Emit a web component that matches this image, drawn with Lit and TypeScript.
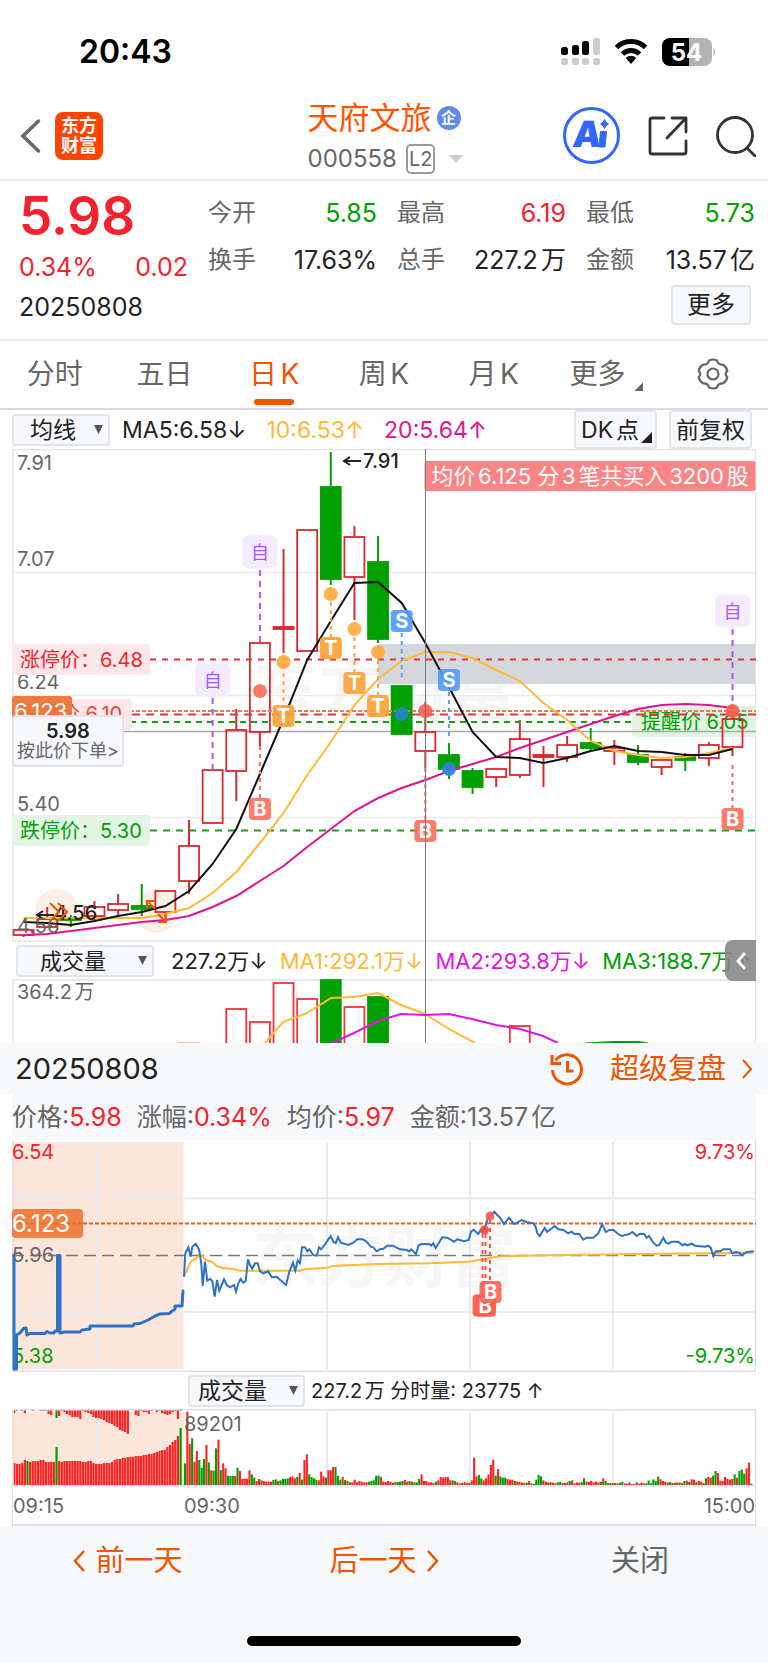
import { LitElement, html, svg, css } from "lit";
import { customElement, state } from "lit/decorators.js";

const UP = "#d7292f";
const DOWN = "#00a000";

type Candle = [up: 0 | 1, high: number, top: number, bottom: number, low: number];

/* Daily candles, one per trading day, in chart units. */
const CANDLES: Candle[] = [
  [1, 929, 930, 935, 937],
  [1, 907, 919, 927, 927],
  [0, 915, 918, 920, 927],
  [1, 901, 907, 916, 920],
  [1, 894, 904, 910, 915],
  [0, 884, 906, 909, 916],
  [1, 891, 891, 912, 920],
  [1, 820, 846, 881, 894],
  [1, 770, 770, 823, 823],
  [1, 709, 730, 771, 801],
  [1, 643, 643, 732, 746],
  [1, 549, 627, 629, 653],
  [1, 530, 530, 651, 651],
  [0, 452, 487, 579, 585],
  [1, 526, 537, 577, 620],
  [0, 536, 562, 639, 643],
  [0, 685, 686, 734, 734],
  [1, 702, 732, 751, 768],
  [0, 743, 755, 769, 779],
  [0, 768, 771, 787, 794],
  [1, 769, 769, 777, 787],
  [1, 720, 739, 775, 778],
  [1, 746, 755, 757, 787],
  [1, 736, 745, 757, 762],
  [0, 728, 743, 748, 751],
  [1, 740, 748, 751, 765],
  [0, 745, 755, 762, 765],
  [1, 760, 760, 767, 775],
  [0, 753, 757, 760, 771],
  [1, 742, 745, 758, 766],
  [1, 710, 719, 747, 756],
];

const dayX = (i: number) => 23.6 + 23.63 * i;
const line = (ys: number[]) => ys.map((y, i) => `${dayX(i).toFixed(1)},${y}`).join(" ");

const MA5 = [922, 923, 925, 921, 916, 912, 906, 891, 864, 829, 774, 719, 660, 621, 583, 582, 603, 643, 687, 732, 757, 758, 763, 758, 751, 746, 751, 752, 755, 755, 749];
const MA10 = [918, 918, 918, 918, 918, 918, 914, 908, 893, 872, 843, 813, 775, 742, 705, 679, 661, 652, 652, 658, 670, 681, 703, 720, 741, 751, 755, 758, 757, 753, 748];
const MA20 = [935, 934, 931, 928, 925, 922, 920, 916, 907, 896, 881, 866, 847, 829, 811, 798, 788, 780, 771, 764, 757, 748, 740, 732, 724, 716, 709, 705, 704, 705, 708];

const VOLUMES: [number, 0 | 1, number][] = [
  [9, 1, 1009], [10, 1, 1022], [11, 1, 983], [12, 1, 999], [13, 0, 980],
  [14, 1, 1007], [15, 0, 997], [21, 1, 1026],
];

/* Minute series are stored at three units per chart unit. */
const third = (flat: number[], dx = 0) => {
  const out: string[] = [];
  for (let i = 0; i < flat.length; i += 2) out.push(`${((flat[i] + dx) / 3).toFixed(1)},${(1130 + flat[i + 1] / 3).toFixed(1)}`);
  return out.join(" ");
};

const PRICE_AM = [552,440,556,370,565,352,572,380,577,350,587,341,597,358,604,400,608,468,615,395,622,452,630,446,637,453,644,500,651,450,658,482,672,448,680,465,690,472,702,465,708,485,715,460,722,447,730,458,737,452,744,388,750,405,757,416,765,400,773,400,780,424,790,430,805,424,815,442,830,440,858,465,868,425,879,398,886,422,893,392,900,400,906,352,915,352,922,364,928,358,940,375,950,377,957,352,963,358,975,343,992,318,1000,335,1007,340,1014,322,1022,338,1045,345,1060,338,1072,328,1088,328,1100,335,1112,350,1120,352,1130,364];
const PRICE_PM = [0,358,10,356,22,347,38,347,60,358,80,360,88,364,94,358,108,372,116,346,125,342,148,342,154,347,160,340,167,354,187,322,202,323,222,335,232,328,252,334,266,330,273,305,281,299,295,312,302,300,313,298,322,270,330,258,343,245,352,255,360,263,372,282,387,263,402,282,412,278,425,270,440,276,460,280,467,290,472,310,479,318,494,294,501,306,524,288,535,298,550,300,564,310,575,305,583,312,598,312,610,329,620,323,640,323,655,310,666,283,678,306,688,300,700,300,715,312,725,318,748,312,757,306,770,318,780,311,793,312,800,323,807,318,820,338,830,347,838,345,850,323,858,338,866,341,875,335,895,335,907,346,915,342,922,346,935,341,945,347,975,350,985,347,992,353,1000,378,1007,364,1020,364,1030,358,1050,358,1057,370,1068,366,1078,368,1086,376,1100,366,1121,364];
const AVG_AM = [552,440,572,395,597,378,605,377,618,390,637,396,650,408,668,414,700,417,720,422,900,422,915,418,980,413,1000,408,1060,405];
const AVG_PM = [0,402,150,400,265,395,315,388,340,382,365,379,430,377,600,374,850,371,1121,368];
const AUCTION = "14,1255 14,1369 16.5,1369 16.5,1335 20,1333 24,1328 26,1328 27,1335 30,1333.5 45,1333.5 47,1331.5 50,1333 54,1333 55,1331 57.5,1331 57.5,1255.5 60,1255.5 60,1333 64,1332 80,1332 82,1330 90,1329 90,1326 133,1326 134,1324 140,1323.5 148,1320 155,1316 160,1314 169,1313.5 175,1309 175,1306 182,1306 183,1291";

/* Per-minute volume; a negative value is a falling minute. */
const MINUTE_VOL = [-65,220,123,-140,70,102,-75,-52,-78,120,-68,44,-43,-110,136,-45,65,50,-28,-27,-27,27,-52,42,18,20,18,44,-32,-22,12,18,-14,12,10,10,10,-15,-17,12,-14,-18,-18,-20,24,26,20,-24,36,-16,75,92,-32,-24,-20,-16,14,40,26,-22,44,44,54,-54,-28,-16,24,-15,12,-8,8,16,8,12,10,8,8,-10,-12,-14,-28,-28,
24,10,9,12,10,-6,9,-9,-10,-12,15,10,-12,10,-8,-8,-18,32,12,12,8,8,6,-10,14,24,22,24,24,14,-14,12,-8,5,6,10,6,-6,14,82,26,-30,-20,14,20,32,60,76,-28,48,-26,-22,-22,18,16,16,-12,10,10,7,6,-7,12,5,-3,-16,-30,-26,14,10,-8,8,7,5,-8,-9,6,6,8,-12,14,5,8,7,-8,-20,10,9,12,8,10,8,-10,20,-12,6,-6,6,-6,5,-7,-10,5,4,8,3,3,-8,4,7,5,-5,-13,-5,-17,-12,-25,17,12,9,-7,9,-6,7,8,-7,6,-12,13,-9,17,16,-8,13,10,5,-20,24,22,-28,-42,36,13,12,24,18,16,18,-32,22,-42,-46,-34,50,67,4,0,58];

const AUCTION_UP = [22,21,21,22,25,-24,23,24,24,24,25,25,23,23,23,23,-38,24,23,24,24,24,24,24,24,24,23,23,24,24,22,21,21,21,22,22,22,23,25,26,26,27,27,28,28,28,29,29,29,30,30,31,31,32,33,34,35,35,38,40,43,45,49,-57];
const AUCTION_DOWN = [3,1,0,1,3,0,0,1,0,0,1,1,1,4,5,0,-8,6,1,2,4,5,7,7,7,9,1,2,3,4,7,8,8,9,10,12,13,14,16,17,20,21,22,24,0,0,5,6,1,2,2,4,1,0,2,1,3,4,5,4,2,1,9,-1];

const badge = (x: number, y: number, t: string, fill: string) => svg`
  <rect x=${x - 11} y=${y - 11} width="22" height="22" rx="4" fill=${fill} opacity=".92"></rect>
  <text class="badge" x=${x} y=${y + 7}>${t}</text>`;

const selfPick = (i: number, y: number, to: number) => svg`
  <line x1=${dayX(i)} x2=${dayX(i)} y1=${y + 18} y2=${to} stroke="#a855ff" stroke-width="2" stroke-dasharray="6 5"></line>
  <rect x=${dayX(i) - 17.5} y=${y - 16.5} width="35" height="33" rx="6" fill="#f4ebff"></rect>
  <text class="self" x=${dayX(i)} y=${y + 7}>自</text>`;

const stem = (x: number, y1: number, y2: number, c: string) =>
  svg`<line x1=${x} x2=${x} y1=${y1} y2=${y2} stroke=${c} stroke-width="2" stroke-dasharray="4 4"></line>`;

const dot = (x: number, y: number, c: string, r = 7) =>
  svg`<circle cx=${x} cy=${y} r=${r} fill=${c} opacity=".92"></circle>`;

const rule = (x1: number, x2: number, y: number, c: string, dash: string, w = 2) =>
  svg`<line x1=${x1} x2=${x2} y1=${y} y2=${y} stroke=${c} stroke-width=${w} stroke-dasharray=${dash}></line>`;

@customElement("stock-kline")
class StockKline extends LitElement {
  static styles = css`
    :host { display: block; position: relative; }
    svg { display: block; width: 100%; height: auto; }
    text { font-size: 20px; }
    .axis { fill: #666; }
    .note { fill: #222; font-weight: 500; }
    .badge { fill: #fff; font-weight: 700; text-anchor: middle; font-size: 20px; }
    .self { fill: #a855ff; font-size: 18px; text-anchor: middle; }
    .water { font-size: 66px; font-weight: 700; fill: #f6f6f6; text-anchor: middle; }
    .tip { fill: #fff; font-size: 22px; text-anchor: middle; text-autospace: normal; }
    .big { font-size: 22px; fill: #fff; }
    .order {
      position: absolute; left: 0; top: 54%;
      padding: 4px 3px; border: 2px solid #e1e3ea; border-radius: 4px;
      background: #f7f8fb; color: #666; font: inherit; font-size: 18px; line-height: 20px;
      text-align: center;
    }
    .order b { display: block; font-size: 20px; font-weight: 600; color: #222; }
  `;

  render() {
    return html`
      <svg viewBox="12 449 744 493" role="img" aria-label="日K">
        <text class="water" x="384" y="714">东方财富</text>
        <g stroke="#e6ebf2" stroke-width="1.5">
          ${[572.5, 695.5, 817.5].map((y) => svg`<line x1="12" x2="756" y1=${y} y2=${y}></line>`)}
        </g>
        <rect x="13" y="449.5" width="742.5" height="491.5" fill="none" stroke="#e2e4e8" stroke-width="1.5"></rect>
        <rect x="378" y="644" width="377" height="40" fill="#d4d7db"></rect>
        <text class="axis" x="17" y="470">7.91</text>
        <text class="axis" x="17" y="566">7.07</text>
        <text class="axis" x="17" y="689">6.24</text>
        <text class="axis" x="17" y="811">5.40</text>

        <circle cx="57" cy="911" r="22" fill="#fdeee6"></circle>
        <circle cx="156.5" cy="911" r="22" fill="#fdeee6"></circle>

        <rect x="632" y="706" width="124" height="31" rx="4" fill="#e1f4e3"></rect>
        <line x1="12" x2="756" y1="731.5" y2="731.5" stroke="#a8a8a8" stroke-width="1.5"></line>
        <text x="641" y="729" fill="#00a000">提醒价 6.05</text>

        ${CANDLES.map(([up, high, top, bottom, low], i) => {
          const x = dayX(i);
          const c = up ? UP : DOWN;
          return svg`
            <line x1=${x} x2=${x} y1=${high} y2=${top} stroke=${c} stroke-width="2"></line>
            <line x1=${x} x2=${x} y1=${bottom} y2=${low} stroke=${c} stroke-width="2"></line>
            <rect x=${x - 10} y=${top} width="20" height=${Math.max(bottom - top, 1)} stroke=${c} stroke-width="1.8"
              fill=${up && bottom - top > 2 ? "none" : c}></rect>`;
        })}

        ${rule(150, 756, 659.5, "#e8333a", "6 6")}
        ${rule(130, 756, 711, "#ee7c41", "4 2")}
        ${rule(132, 756, 714.5, "#e8333a", "8 6")}
        ${rule(130, 632, 722, "#16a016", "6 5")}
        ${rule(150, 756, 830.5, "#16a016", "7 6")}

        <g fill="none" stroke-width="2">
          <polyline points=${line(MA20)} stroke="#e0148c"></polyline>
          <polyline points=${line(MA10)} stroke="#ffb838"></polyline>
          <polyline points=${line(MA5)} stroke="#111"></polyline>
        </g>

        ${selfPick(10, 552, 643)} ${selfPick(8, 680, 770)} ${selfPick(30, 611, 708)}

        ${stem(dayX(11), 665, 706, "#ffa33a")} ${dot(dayX(11), 662, "#ffa940")} ${badge(dayX(11), 716, "T", "#fca237")}
        ${stem(dayX(13), 594, 638, "#ffa33a")} ${dot(dayX(13), 594, "#ffa940")} ${badge(dayX(13), 648, "T", "#fca237")}
        ${stem(dayX(14), 629, 672, "#ffa33a")} ${dot(dayX(14), 629, "#ffa940")} ${badge(dayX(14), 683, "T", "#fca237")}
        ${stem(dayX(15), 652, 695, "#ffa33a")} ${dot(dayX(15), 652, "#ffa940")} ${badge(dayX(15), 706, "T", "#fca237")}
        ${stem(dayX(16), 633, 680, "#5b9ff5")} ${dot(dayX(16), 714, "#1f86c8")} ${badge(dayX(16), 621, "S", "#559bfa")}
        ${stem(dayX(18), 692, 736, "#5b9ff5")} ${dot(dayX(18), 769, "#2f86dc")} ${badge(dayX(18), 680, "S", "#559bfa")}
        ${stem(dayX(10), 746, 798, "#ff6a5a")} ${dot(dayX(10), 691, "#ff6f61")} ${badge(dayX(10), 809, "B", "#ff7060")}
        ${stem(dayX(17), 768, 820, "#ff6a5a")} ${dot(dayX(17), 711, "#f8604f")} ${badge(dayX(17), 831, "B", "#ff7060")}
        ${stem(dayX(30), 765, 808, "#ff6a5a")} ${dot(dayX(30), 711, "#f8604f")} ${badge(dayX(30), 819, "B", "#ff7060")}

        <rect x="12" y="644" width="138" height="31" rx="4" fill="#ffe6e8"></rect>
        <text x="20" y="667" fill="#f5222d">涨停价：6.48</text>
        <rect x="12" y="815" width="138" height="31" rx="4" fill="#e3f5e5"></rect>
        <text x="20" y="838" fill="#00a000">跌停价：5.30</text>
        <rect x="12" y="699" width="120" height="31" rx="4" fill="#ffe6e8"></rect>
        <rect x="12" y="696" width="60" height="24" rx="3" fill="#ee7c41"></rect>
        <text x="20" y="721" fill="#f0453a">提醒价 6.10</text>
        <rect x="12" y="696" width="60" height="24" rx="3" fill="#ee7c41" opacity=".75"></rect>
        <text class="big" x="14" y="719">6.123</text>

        <path d="M361 461H345M350 457l-6 4 6 4" stroke="#222" stroke-width="2" fill="none"></path>
        <text class="note" x="363" y="468">7.91</text>
        <path d="M54 915H38M43 911l-6 4 6 4" stroke="#222" stroke-width="2" fill="none"></path>
        <text class="note" x="54" y="920">4.56</text>
        <text class="axis" x="17" y="933">4.56</text>
        <g fill="none" stroke="#ee5500" stroke-width="2">
          <path d="M50 903l9 9-9 9M58 903l9 9-9 9"></path>
          <path d="M147 909v-8h8M147 901l8 8M166 914v8h-8M166 922l-8-8"></path>
        </g>

        <rect x="424.5" y="461" width="331" height="30" rx="3" fill="#fb8585"></rect>
        <text class="tip" x="590" y="484">均价6.125 分3笔共买入3200股</text>
      </svg>
      <button class="order"><b>5.98</b>按此价下单&gt;</button>
    `;
  }
}

@customElement("stock-volume")
class StockVolume extends LitElement {
  static styles = css`
    :host { display: block; }
    svg { display: block; width: 100%; height: auto; }
    text { font-size: 20px; fill: #666; text-autospace: normal; }
  `;
  render() {
    return html`
      <svg viewBox="12 979 744 64" role="img" aria-label="成交量">
        <path d="M13 1043V980H755.5V1043" fill="none" stroke="#e2e4e8" stroke-width="1.5"></path>
        <text x="17" y="999">364.2万</text>
        <rect x="178" y="1042" width="22" height="2" fill="#f9bcbc"></rect>
        ${VOLUMES.map(([i, up, y]) => svg`<rect x=${dayX(i) - 10} y=${y} width="20" height="70"
          fill=${up ? "#fff" : DOWN} stroke=${up ? "#f5333a" : DOWN} stroke-width="1.8"></rect>`)}
        <g fill="none" stroke-width="2">
          <polyline stroke="#ffb838" points="265,1043 283,1022 307,1013 331,998 354,997 378,993 401,1005 425,1014 449,1029 475,1043"></polyline>
          <polyline stroke="#e414e4" points="332,1043 354,1033 378,1021 401,1014 425,1015 449,1014 472,1019 496,1025 520,1029 543,1036 558,1043"></polyline>
          <polyline stroke="#00a000" points="585,1043.5 614,1042 638,1042 648,1043.5"></polyline>
        </g>
      </svg>`;
  }
}

@customElement("minute-price")
class MinutePrice extends LitElement {
  static styles = css`
    :host { display: block; }
    svg { display: block; width: 100%; height: auto; }
    text { font-size: 20px; }
    .water { font-size: 66px; font-weight: 700; fill: #f6f6f6; text-anchor: middle; }
    .badge { fill: #fff; font-weight: 700; text-anchor: middle; }
    .big { font-size: 24px; fill: #fff; }
    .end { text-anchor: end; }
  `;
  render() {
    return html`
      <svg viewBox="12 1140 744 232" role="img" aria-label="分时">
        <text class="water" x="384" y="1282">东方财富</text>
        <rect x="12" y="1142" width="171.5" height="227" fill="#fce6da"></rect>
        <g stroke="#e6eaf1" stroke-width="2">
          ${[98, 327, 470, 613].map((x) => svg`<line x1=${x} x2=${x} y1="1142" y2="1369"></line>`)}
          ${[1198.5, 1312].map((y) => svg`<line x1="12" x2="756" y1=${y} y2=${y}></line>`)}
        </g>
        <path d="M13 1140V1371M755.5 1140V1371M12 1371.3H756" stroke="#dcdfe6" stroke-width="1.5" fill="none"></path>
        <line x1="12" x2="750" y1="1255.5" y2="1255.5" stroke="#777" stroke-width="1.6" stroke-dasharray="12 6"></line>
        ${rule(83, 756, 1223.5, "#ee5a10", "4 2")}
        <rect x="12" y="1209" width="71" height="29" rx="4" fill="#ef8145"></rect>
        ${rule(12, 83, 1223.5, "#ee6a20", "4 2")}
        <text x="12" y="1262" fill="#666">5.96</text>
        <text x="12" y="1363" fill="#00a000">5.38</text>
        <polyline points=${AUCTION} fill="none" stroke="#2f72c4" stroke-width="3" stroke-linejoin="round" stroke-linecap="round"></polyline>
        <polyline points=${third(AVG_AM) + " " + third(AVG_PM, 1140)} fill="none" stroke="#ffb838" stroke-width="2"></polyline>
        <polyline points=${third(PRICE_AM) + " " + third(PRICE_PM, 1140)} fill="none" stroke="#2f72c4" stroke-width="2"></polyline>
        ${stem(482.5, 1234, 1296, "#ff5544")} ${stem(485.5, 1234, 1296, "#ff5544")} ${stem(490, 1220, 1282, "#ff5544")}
        ${dot(484.5, 1230, "#f5483c", 4.5)} ${dot(490, 1216, "#f5605a", 4.5)}
        ${badge(483.5, 1305.5, "B", "#ff5e4d")} ${badge(485, 1305.5, "B", "#ff5e4d")} ${badge(490.5, 1292, "B", "#ff6656")}
        <text class="big" x="12" y="1232">6.123</text>
        <text x="12" y="1159" fill="#f5222d">6.54</text>
        <text class="end" x="755" y="1159" fill="#f5222d">9.73%</text>
        <text class="end" x="755" y="1363" fill="#00a000">-9.73%</text>
      </svg>`;
  }
}

@customElement("minute-volume")
class MinuteVolume extends LitElement {
  static styles = css`
    :host { display: block; }
    svg { display: block; width: 100%; height: auto; }
    text { font-size: 20px; fill: #666; }
  `;
  render() {
    const base = 1485;
    const tint = (v: number) => (v < 0 ? "#00a000" : "#ff2222");
    return html`
      <svg viewBox="12 1409 744 78" role="img" aria-label="分时量">
        <rect x="12" y="1412" width="171.5" height="73" fill="#fce6da"></rect>
        <g stroke="#e6eaf1" stroke-width="2">
          ${[98, 327, 470, 613].map((x) => svg`<line x1=${x} x2=${x} y1="1412" y2="1485"></line>`)}
        </g>
        ${AUCTION_UP.map((v, i) => svg`<rect x=${13.2 + i * 2.64} y=${base - Math.abs(v)} width="2.2" height=${Math.abs(v)} fill=${tint(v)}></rect>`)}
        ${AUCTION_DOWN.map((v, i) => svg`<rect x=${13.2 + i * 2.64} y="1410" width="2.2" height=${Math.abs(v)} fill=${tint(v)}></rect>`)}
        ${MINUTE_VOL.map((v, i) => svg`<rect x=${183.9 + i * 2.39} y=${base - Math.abs(v) / 3} width="2.1" height=${Math.abs(v) / 3} fill=${tint(v)}></rect>`)}
        <path d="M13 1486V1409.8H755.5V1486Z" fill="none" stroke="#dcdfe6" stroke-width="1.6"></path>
        <text x="184" y="1431">89201</text>
      </svg>`;
  }
}

@customElement("app-root")
class AppRoot extends LitElement {
  @state() private tab = "日K";

  static styles = css`
    :host {
      display: flex; flex-direction: column; background: #fff; color: #222; min-height: 100vh;
      font-family: Inter, "Noto Sans CJK SC", sans-serif; font-size: 24px; line-height: 32px;
      text-autospace: normal;
    }
    * { box-sizing: border-box; }
    button { font: inherit; color: inherit; background: none; border: 0; padding: 0; margin: 0; display: block; }
    a { color: inherit; text-decoration: none; }
    svg { display: block; }
    .red { color: #f5222d; }
    .green { color: #00a000; }
    .orange { color: #ee5500; }
    .amber { color: #ffb838; }
    .magenta { color: #e0148c; }
    .violet { color: #e414e4; }

    .status { display: flex; justify-content: space-between; align-items: center; height: 96px; padding: 8px 52px 0 79px; }
    .time { font-size: 32px; font-weight: 600; color: #000; }
    .radios { display: flex; align-items: center; gap: 14px; }
    .cell { font-size: 24px; font-weight: 700; fill: #fff; text-anchor: middle; }

    .head { display: grid; grid-template-columns: 1fr auto 1fr; align-items: center; height: 85px; padding: 0 12px 0 20px; border-bottom: 2px solid #ebebee; }
    .left, .right { display: flex; align-items: center; padding-bottom: 4px; }
    .left { gap: 14px; }
    .right { gap: 28px; justify-content: flex-end; }
    .logo { display: grid; place-content: center; width: 48px; height: 48px; border-radius: 8px; background: #ff4400; color: #fff; font-size: 18px; line-height: 20px; font-weight: 700; text-align: center; }
    .title { display: flex; flex-direction: column; gap: 7px; }
    .name, .code { display: flex; align-items: center; margin: 0; font-weight: 400; }
    .name { gap: 5px; font-size: 31px; line-height: 36px; color: #ff5500; }
    .corp { display: grid; place-content: center; width: 24px; height: 24px; border-radius: 50%; background: #5e8bea; color: #fff; font-size: 15px; line-height: 24px; font-weight: 700; margin-right: 6px; }
    .code { gap: 9px; color: #666; font-size: 24px; }
    .level { border: 2px solid #999; border-radius: 5px; font-size: 20px; line-height: 26px; padding: 0 1px; }
    .ai { font-size: 36px; font-weight: 900; fill: #3366ff; }

    .quote { display: grid; grid-template-columns: repeat(4, 1fr); column-gap: 20px; padding: 7px 13px 13px 19px; border-bottom: 2px solid #ebebee; }
    .last { display: flex; flex-direction: column; gap: 7px; padding-bottom: 4px; font-size: 25px; }
    .price { font-size: 53px; line-height: 56px; font-weight: 600; }
    .pair { display: flex; justify-content: space-between; }
    .stats { grid-column: span 3; display: grid; grid-template-columns: repeat(3, 1fr); gap: 15px 20px; padding-top: 9px; align-content: start; margin: 0; }
    .stats dt { color: #666; }
    .stats dd { margin: 0; font-size: 25px; }
    .day { grid-column: span 3; align-self: center; padding-top: 1px; font-size: 25px; }
    .more { justify-self: end; width: 80px; height: 40px; margin: -2px 4px 1px 0; border: 2px solid #e1e3ea; border-radius: 4px; background: #f7f8fb; }

    .tabs { display: grid; grid-template-columns: repeat(7, 1fr); height: 69px; border-bottom: 2px solid #d9dbe3; }
    .tab { position: relative; font-size: 28px; color: #666; justify-self: center; padding-bottom: 2px; }
    .tab.on { color: #ee5500; }
    .tab.on::after { content: ""; position: absolute; left: 50%; bottom: 3px; width: 40px; height: 6px; margin-left: -20px; border-radius: 3px; background: #ee5500; }
    .tab.menu { padding-right: 12px; }
    .tab.menu::after, .dk::after { content: ""; position: absolute; clip-path: polygon(100% 0, 100% 100%, 0 100%); }
    .tab.menu::after { right: -6px; bottom: 17px; width: 9px; height: 9px; background: #666; }

    .body { padding: 0 12px; }
    .stock { position: relative; }
    .cross { position: absolute; top: 39px; bottom: 0; left: 55.5%; width: 1px; background: #777; pointer-events: none; }
    .bar { display: flex; align-items: center; height: 39px; font-size: 23px; white-space: nowrap; }
    .bar.main { gap: 12px; }
    .averages { display: flex; gap: 20px; }
    .push { margin: 0 4px 0 auto; display: flex; gap: 12px; }
    .box { position: relative; height: 39px; padding: 0 5px; border: 2px solid #e1e3ea; border-radius: 4px; background: #f7f8fb; }
    .dk { padding-right: 16px; }
    .dk::after { right: 3px; bottom: 4px; width: 11px; height: 11px; background: #222; }
    .pick { flex: none; display: grid; grid-template-columns: 1fr auto; align-items: center; border: 2px solid #e1e3ea; border-radius: 4px; background: #f7f8fb; }
    .pick::after { content: ""; grid-area: 1 / 2; width: 9px; height: 9px; margin-right: 5px; background: #555; clip-path: polygon(0 0, 100% 0, 50% 100%); pointer-events: none; }
    .pick select { grid-area: 1 / 1 / 2 / 3; appearance: none; border: 0; background: none; color: #222; font: inherit; line-height: 28px; padding: 0; margin: 0; height: 28px; }
    .ma { width: 98px; }
    .ma select { padding-left: 16px; }
    .vol { width: 138px; margin-right: 5px; }
    .vol select { padding-left: 22px; }
    .bar.sub { height: 37px; gap: 12px; padding-left: 4px; font-size: 22px; text-autospace: no-autospace; }
    .fold { position: absolute; z-index: 1; right: 0; bottom: 62px; width: 31px; height: 41px; border-radius: 8px 0 0 8px; background: rgba(130, 130, 130, 0.85); display: grid; place-content: center; }

    .replay { display: flex; align-items: center; height: 51px; padding: 0 15px 0 15px; background: #f7f8fa; font-size: 29px; }
    .go { margin-left: auto; display: flex; align-items: center; gap: 16px; }
    .go .watch { margin-right: 10px; }
    .info { display: flex; gap: 15px; height: 46px; align-items: center; background: #f7f8fa; color: #666; font-size: 25px; white-space: nowrap; }
    .info b { font-weight: 400; }
    .bar.minute { height: 37px; gap: 6px; font-size: 20px; padding-left: 176px; }
    .small { width: 117px; font-size: 23px; }
    .small select { padding-left: 8px; }
    .axis { display: grid; grid-template-columns: 171px 1fr auto; height: 39px; align-items: center; font-size: 20px; color: #666; border: solid #dcdfe6; border-width: 0 1px 2px; }

    .foot { flex: 1; background: #f7f8fa; display: flex; flex-direction: column; gap: 57px; justify-content: space-between; align-items: center; padding: 17px 0; }
    .nav { display: grid; grid-template-columns: repeat(3, 1fr); width: 100%; font-size: 29px; line-height: 36px; color: #666; }
    .nav button { justify-self: center; display: flex; align-items: center; gap: 10px; }
    .home { width: 274px; height: 10px; border-radius: 5px; background: #000; }
  `;

  private pickTab(t: string) {
    this.tab = t;
  }

  render() {
    const tabs = ["分时", "五日", "日K", "周K", "月K", "更多"];
    return html`
      <div class="status">
        <span class="time">20:43</span>
        <div class="radios">
          <svg width="39" height="28" viewBox="0 0 39 28">
            <g fill="#000"><rect x="0" y="9" width="7" height="8" rx="2.5"></rect><rect x="11" y="7" width="7" height="10" rx="2.5"></rect><rect x="21" y="3" width="7" height="14" rx="2.5"></rect></g>
            <g fill="#ccc"><rect x="32" y="0" width="7" height="17" rx="2.5"></rect><rect x="0" y="20" width="7" height="7" rx="2.5"></rect><rect x="11" y="20" width="7" height="7" rx="2.5"></rect><rect x="21" y="20" width="7" height="7" rx="2.5"></rect><rect x="32" y="20" width="7" height="7" rx="2.5"></rect></g>
          </svg>
          <svg width="34" height="26" viewBox="0 0 34 26" fill="none" stroke="#000" stroke-width="5">
            <path d="M2.5 8.5a20.5 20.5 0 0 1 29 0"></path><path d="M8.5 15a12 12 0 0 1 17 0"></path>
            <path d="M11.8 19a7.4 7.4 0 0 1 10.4 0L17 25z" fill="#000" stroke="none"></path>
          </svg>
          <svg width="54" height="28" viewBox="0 0 54 28">
            <clipPath id="b"><rect width="50" height="28" rx="8"></rect></clipPath>
            <g clip-path="url(#b)"><rect width="50" height="28" fill="#b3b3b3"></rect><rect width="27" height="28" fill="#000"></rect></g>
            <path d="M51.5 9.5q3 4.500 0 9z" fill="#b3b3b3"></path>
            <text class="cell" x="24.500" y="23">54</text>
          </svg>
        </div>
      </div>

      <header class="head">
        <div class="left">
          <button aria-label="返回"><svg width="21" height="36" viewBox="0 0 21 36" fill="none" stroke="#666" stroke-width="3.500" stroke-linecap="round"><path d="M18.500 3L3 18l15.500 15"></path></svg></button>
          <a class="logo" href="#">东方<br />财富</a>
        </div>
        <div class="title">
          <h1 class="name">天府文旅<span class="corp">企</span></h1>
          <p class="code">000558<span class="level">L2</span>
            <svg width="24" height="9" viewBox="0 0 24 9"><path d="M5 0h14l-7 8z" fill="#ccc"></path></svg></p>
        </div>
        <div class="right">
          <button aria-label="AI"><svg width="57" height="57" viewBox="0 0 57 57">
            <circle cx="28.500" cy="28.500" r="27" fill="none" stroke="#3366ff" stroke-width="3"></circle>
            <text class="ai" x="13" y="40" transform="skewX(-6)">A</text>
            <path d="M37.500 24.500h6l-1.500 15.500h-6z" fill="#3366ff" stroke="#3366ff" stroke-linejoin="round"></path>
            <path d="M41.500 12.500q1 3.500 4 4.500-3 1-4 4.500-1-3.500-4-4.500 3-1 4-4.500z" fill="#3366ff" stroke="#3366ff"></path>
          </svg></button>
          <button aria-label="分享"><svg width="40" height="42" viewBox="0 0 40 42" fill="none" stroke="#333" stroke-width="2.800" stroke-linecap="round" stroke-linejoin="round">
            <path d="M16 3H4q-2 0-2 2v32q0 2 2 2h32q2 0 2-2V26"></path><path d="M24 3h14v14M38 3L19 23"></path></svg></button>
          <button aria-label="搜索"><svg width="40" height="42" viewBox="0 0 40 42" fill="none" stroke="#333" stroke-width="2.800" stroke-linecap="round">
            <circle cx="19" cy="20" r="17.500"></circle><path d="M31 33l8 8"></path></svg></button>
        </div>
      </header>

      <section class="quote">
        <div class="last">
          <span class="price red">5.98</span>
          <div class="pair red"><span>0.34%</span><span>0.02</span></div>
        </div>
        <dl class="stats">
          <div class="pair"><dt>今开</dt><dd class="green">5.85</dd></div>
          <div class="pair"><dt>最高</dt><dd class="red">6.19</dd></div>
          <div class="pair"><dt>最低</dt><dd class="green">5.73</dd></div>
          <div class="pair"><dt>换手</dt><dd>17.63%</dd></div>
          <div class="pair"><dt>总手</dt><dd>227.2万</dd></div>
          <div class="pair"><dt>金额</dt><dd>13.57亿</dd></div>
        </dl>
        <span class="day">20250808</span>
        <button class="more">更多</button>
      </section>

      <nav class="tabs">
        ${tabs.map((t) => html`<button class="tab ${t === this.tab ? "on" : ""} ${t === "更多" ? "menu" : ""}" @click=${() => this.pickTab(t)}>${t}</button>`)}
        <button class="tab" aria-label="设置"><svg width="32" height="32" viewBox="0 0 32 32" fill="none" stroke="#666" stroke-width="2.200" stroke-linejoin="round">
          <path d="M12 2.500q4-2 8 0 1 4.500 6 4.200 3.800 2.300 4.300 6.300-3.300 3 0 6-.5 4-4.300 6.300-5-.3-6 4.200-4 2-8 0-1-4.500-6-4.200-3.800-2.300-4.300-6.300 3.300-3 0-6 .5-4 4.300-6.300 5 .3 6-4.200z"></path><circle cx="16" cy="16" r="5.500"></circle></svg></button>
      </nav>

      <main class="body">
        <section class="stock">
          <div class="bar main">
            <label class="pick ma"><select aria-label="指标"><option>均线</option></select></label>
            <div class="averages"><span>MA5:6.58↓</span><span class="amber">10:6.53↑</span><span class="magenta">20:5.64↑</span></div>
            <div class="push"><button class="box dk">DK点</button><button class="box">前复权</button></div>
          </div>
          <stock-kline></stock-kline>
          <div class="bar sub">
            <label class="pick vol"><select aria-label="副图"><option>成交量</option></select></label>
            <span>227.2万↓</span><span class="amber">MA1:292.1万↓</span><span class="violet">MA2:293.8万↓</span><span class="green">MA3:188.7万↑</span>
          </div>
          <stock-volume></stock-volume>
          <button class="fold" aria-label="展开"><svg width="12" height="18" viewBox="0 0 12 18" fill="none" stroke="#fff" stroke-width="3"><path d="M10 1L3 9l7 8"></path></svg></button>
          <div class="cross"></div>
        </section>
      </main>

      <div class="replay">
        <span>20250808</span>
        <a class="go orange" href="#">
          <svg class="watch" width="34" height="34" viewBox="0 0 34 34" fill="none" stroke="#ee5500" stroke-width="3">
            <path d="M5.500 8.500A14.500 14.500 0 1 1 2.500 18"></path><path d="M2 3v8.500h9"></path><path d="M17.500 9v10h6"></path></svg>
          超级复盘
          <svg width="11" height="20" viewBox="0 0 11 20" fill="none" stroke="#ee5500" stroke-width="2"><path d="M1 1l8 9-8 9"></path></svg>
        </a>
      </div>

      <section class="body">
        <div class="info">
          <span>价格:<b class="red">5.98</b></span><span>涨幅:<b class="red">0.34%</b></span>
          <span>均价:<b class="red">5.97</b></span><span>金额:13.57亿</span>
        </div>
        <minute-price></minute-price>
        <div class="bar minute">
          <label class="pick small"><select aria-label="分时副图"><option>成交量</option></select></label>
          <span>227.2万 分时量: 23775 ↑</span>
        </div>
        <minute-volume></minute-volume>
        <div class="axis"><span>09:15</span><span>09:30</span><span>15:00</span></div>
      </section>

      <footer class="foot">
        <div class="nav">
          <button class="orange"><svg width="12" height="22" viewBox="0 0 12 22" fill="none" stroke="#ee5500" stroke-width="2.500"><path d="M11 1L2 11l9 10"></path></svg>前一天</button>
          <button class="orange">后一天<svg width="12" height="22" viewBox="0 0 12 22" fill="none" stroke="#ee5500" stroke-width="2.500"><path d="M1 1l9 10-9 10"></path></svg></button>
          <button>关闭</button>
        </div>
        <div class="home"></div>
      </footer>
    `;
  }
}
